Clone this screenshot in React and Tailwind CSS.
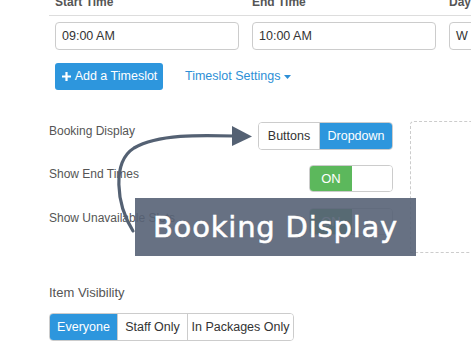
import React from 'react';

// segmented control used for Booking Display and Item Visibility
function Segmented({ options, active, widths, className = '' }) {
  return (
    <div className={`flex h-[28px] rounded-[4px] border border-[#cccccc] overflow-hidden ${className}`}>
      {options.map((opt, i) => (
        <div
          key={opt}
          className={`flex items-center justify-center text-[12.5px] ${
            i > 0 ? 'border-l border-[#cccccc]' : ''
          } ${i === active ? 'bg-[#2d96dd] text-white border-[#2d96dd]' : 'bg-white text-[#333333]'}`}
          style={{ width: widths[i] }}
        >
          {opt}
        </div>
      ))}
    </div>
  );
}

function Toggle() {
  return (
    <div className="flex h-[27px] w-[84px] rounded-[4px] border border-[#cccccc] overflow-hidden">
      <div className="w-[42px] bg-[#5cb85c] text-white text-[13px] flex items-center justify-center">ON</div>
      <div className="flex-1 bg-white" />
    </div>
  );
}

export default function App() {
  return (
    <div
      className="relative w-[471px] h-[360px] overflow-hidden bg-white text-[#555555]"
      style={{ fontFamily: '"Liberation Sans", Arial, sans-serif' }}
    >
      {/* timeslot table */}
      <div className="ml-[49px]">
        <div className="h-[16px] border-b border-[#dddddd] grid grid-cols-[197px_197px_197px] overflow-hidden">
          {['Start Time', 'End Time', 'Day'].map((h) => (
            <div key={h} className="pl-[6px] -mt-[5px] text-[12px] font-bold leading-[14px] text-[#555555]">
              {h}
            </div>
          ))}
        </div>
        <div className="grid grid-cols-[197px_197px_197px] mt-[6px]">
          {['09:00 AM', '10:00 AM', 'W'].map((v) => (
            <div key={v} className="pl-[6px]">
              <div className="h-[28px] w-[184px] rounded-[4px] border border-[#cccccc] flex items-center pl-[6px] text-[12.5px] text-[#333333]">
                {v}
              </div>
            </div>
          ))}
        </div>
        <div className="flex items-center mt-[13px] pl-[6px]">
          <div className="h-[27px] w-[108px] rounded-[3px] bg-[#2d96dd] text-white text-[12.5px] flex items-center justify-center gap-[3px]">
            <svg width="11" height="11" viewBox="0 0 11 11">
              <path d="M5.5 1v9M1 5.5h9" stroke="white" strokeWidth="2.2" />
            </svg>
            Add a Timeslot
          </div>
          <div className="ml-[22px] text-[12.5px] text-[#2d8fd6] flex items-center gap-[4px]">
            Timeslot Settings
            <svg width="7" height="4" viewBox="0 0 7 4">
              <path d="M0 0h7L3.5 4z" fill="#2d8fd6" />
            </svg>
          </div>
        </div>
      </div>

      {/* display settings */}
      <div className="flex mt-[32px] ml-[49px]">
        <div className="w-[344px] shrink-0 flex flex-col gap-[15px]">
          <div className="flex items-start justify-between h-[28px]">
            <div className="text-[12px] leading-[16px] mt-[1px]">Booking Display</div>
            <Segmented options={['Buttons', 'Dropdown']} active={1} widths={[60, 73]} />
          </div>
          <div className="flex items-start justify-between h-[27px]">
            <div className="text-[12px] leading-[16px] mt-[1px]">Show End Times</div>
            <Toggle />
          </div>
          <div className="flex items-start justify-between h-[27px] mt-[1px]">
            <div className="text-[12px] leading-[16px] mt-[2px]">Show Unavailable Slots</div>
            <Toggle />
          </div>
        </div>
        <div className="ml-[17px] -mt-[1px] h-[132px] w-[90px] shrink-0 rounded-tl-[4px] border-l border-b border-t border-dashed border-[#cccccc]" />
      </div>

      {/* item visibility */}
      <div className="ml-[49px] mt-[32px]">
        <div className="text-[13px] leading-[16px]">Item Visibility</div>
        <Segmented
          className="mt-[12px] w-fit"
          options={['Everyone', 'Staff Only', 'In Packages Only']}
          active={0}
          widths={[67, 70, 106]}
        />
      </div>

      {/* callout arrow */}
      <svg className="absolute left-0 top-0" width="471" height="360" viewBox="0 0 471 360">
        <path
          d="M133 231 C116 204 112 162 134 148 C158 134 200 135 234 136"
          fill="none"
          stroke="#546173"
          strokeWidth="3.2"
          strokeLinecap="round"
        />
        <path d="M232 126 L252 136.5 L232 146 Z" fill="#546173" />
      </svg>

      {/* callout label */}
      <div className="absolute left-[135px] top-[198px] w-[281px] h-[58px] bg-[#566275]/90 flex items-center justify-center">
        <span
          className="text-white text-[29px] leading-none tracking-[0.8px] [-webkit-text-stroke:0.5px_white]"
          style={{ fontFamily: '"DejaVu Sans", sans-serif' }}
        >
          Booking Display
        </span>
      </div>
    </div>
  );
}
